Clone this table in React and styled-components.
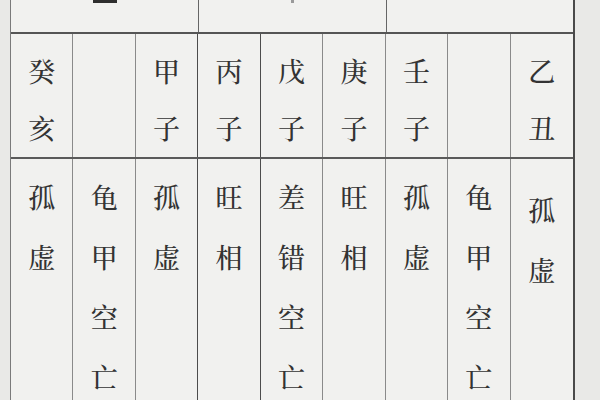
import React from 'react';
import styled, { createGlobalStyle } from 'styled-components';

const GlobalStyle = createGlobalStyle`
  html, body {
    margin: 0;
    padding: 0;
    background: #e9e9e7;
  }
`;

const stems = [
  ['癸', '亥'],
  [],
  ['甲', '子'],
  ['丙', '子'],
  ['戊', '子'],
  ['庚', '子'],
  ['壬', '子'],
  [],
  ['乙', '丑'],
];

const notes = [
  ['孤', '虚'],
  ['龟', '甲', '空', '亡'],
  ['孤', '虚'],
  ['旺', '相'],
  ['差', '错', '空', '亡'],
  ['旺', '相'],
  ['孤', '虚'],
  ['龟', '甲', '空', '亡'],
  ['孤', '虚'],
];

// darker rules sit after these columns
const darkRules = [2, 3];

const Sheet = styled.div`
  width: 600px;
  height: 400px;
  overflow: hidden;
  display: flex;
  padding-left: 10px;
  box-sizing: border-box;
  background: #e9e9e7;
  font-family: 'Noto Serif CJK SC', 'Noto Sans CJK SC', serif;
  color: #333;
`;

const Table = styled.div`
  width: 565px;
  height: 100%;
  display: flex;
  flex-direction: column;
  background: #f1f1ef;
  border-left: 1.5px solid #7a7a7a;
  border-right: 2px solid #4a4a4a;
  box-sizing: border-box;
`;

const HeaderRow = styled.div`
  flex: none;
  height: 34px;
  display: grid;
  grid-template-columns: 188px 188px 1fr;
  border-bottom: 2px solid #555;
  box-sizing: border-box;
`;

const HeaderCell = styled.div`
  display: flex;
  justify-content: center;
  align-items: flex-start;
  border-right: ${p => (p.$last ? 'none' : '1.5px solid #666')};
`;

const Stub = styled.div`
  width: ${p => p.$w}px;
  height: 3px;
  background: ${p => p.$c};
`;

const Row = styled.div`
  display: grid;
  grid-template-columns: repeat(9, 1fr);
  height: ${p => p.$h || 'auto'};
  flex: ${p => (p.$grow ? '1 1 0' : 'none')};
  min-height: 0;
  border-bottom: ${p => (p.$ruled ? '2px solid #5a5a5a' : 'none')};
  box-sizing: border-box;
`;

const Cell = styled.div`
  display: flex;
  flex-direction: column;
  align-items: center;
  padding-top: ${p => p.$pad}px;
  border-right: ${p =>
    p.$last ? 'none' : p.$dark ? '1.5px solid #4c4c4c' : '1.5px solid #8a8a8a'};
  font-size: 27px;
  font-weight: 500;
  line-height: ${p => p.$lh}px;
`;

const Glyph = styled.span`
  display: block;
`;

export default function App() {
  return (
    <>
      <GlobalStyle />
      <Sheet>
        <Table>
          <HeaderRow>
            <HeaderCell>
              <Stub $w={24} $c="#2e2e2e" />
            </HeaderCell>
            <HeaderCell>
              <Stub $w={3} $c="#9a9a9a" />
            </HeaderCell>
            <HeaderCell $last />
          </HeaderRow>

          <Row $h="125px" $ruled>
            {stems.map((col, i) => (
              <Cell
                key={i}
                $pad={8}
                $lh={57}
                $last={i === 8}
                $dark={darkRules.includes(i)}
              >
                {col.map((ch, j) => (
                  <Glyph key={j}>{ch}</Glyph>
                ))}
              </Cell>
            ))}
          </Row>

          <Row $grow>
            {notes.map((col, i) => (
              <Cell
                key={i}
                $pad={i === 8 ? 21 : 8}
                $lh={60}
                $last={i === 8}
                $dark={darkRules.includes(i)}
              >
                {col.map((ch, j) => (
                  <Glyph key={j}>{ch}</Glyph>
                ))}
              </Cell>
            ))}
          </Row>
        </Table>
      </Sheet>
    </>
  );
}
